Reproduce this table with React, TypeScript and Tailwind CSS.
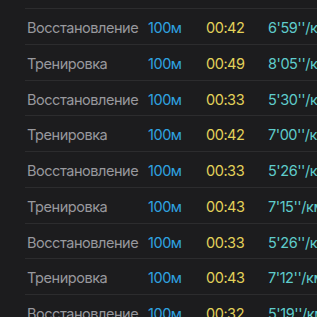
import React from "react";

type Split = { kind: string; dist: string; time: string; pace: string };

const splits: Split[] = [
  { kind: "Восстановление", dist: "100м", time: "00:42", pace: "6'59''/км" },
  { kind: "Тренировка", dist: "100м", time: "00:49", pace: "8'05''/км" },
  { kind: "Восстановление", dist: "100м", time: "00:33", pace: "5'30''/км" },
  { kind: "Тренировка", dist: "100м", time: "00:42", pace: "7'00''/км" },
  { kind: "Восстановление", dist: "100м", time: "00:33", pace: "5'26''/км" },
  { kind: "Тренировка", dist: "100м", time: "00:43", pace: "7'15''/км" },
  { kind: "Восстановление", dist: "100м", time: "00:33", pace: "5'26''/км" },
  { kind: "Тренировка", dist: "100м", time: "00:43", pace: "7'12''/км" },
  { kind: "Восстановление", dist: "100м", time: "00:32", pace: "5'19''/км" },
];

export default function App() {
  return (
    <div
      className="w-[317px] h-[317px] overflow-hidden bg-[#1c1c1e] pt-[8px]"
      style={{ fontFamily: "Inter, 'Noto Sans', sans-serif" }}
    >
      <div className="flex flex-col">
        {splits.map((s, i) => (
          <div key={i} className="ml-[25px] border-t border-[#2c2c2e] h-[35.75px] shrink-0">
            <div className="flex items-center h-full pl-[2px] pt-[3px] text-[14.5px] tracking-[-0.45px] whitespace-nowrap">
              <span className="w-[121px] shrink-0 text-[#98989d]">{s.kind}</span>
              <span className="w-[58px] shrink-0 text-[#2fa3e0]">{s.dist}</span>
              <span className="w-[62px] shrink-0 text-[#e3d25a]">{s.time}</span>
              <span className="shrink-0 text-[#5fcccc]">{s.pace}</span>
            </div>
          </div>
        ))}
      </div>
    </div>
  );
}
